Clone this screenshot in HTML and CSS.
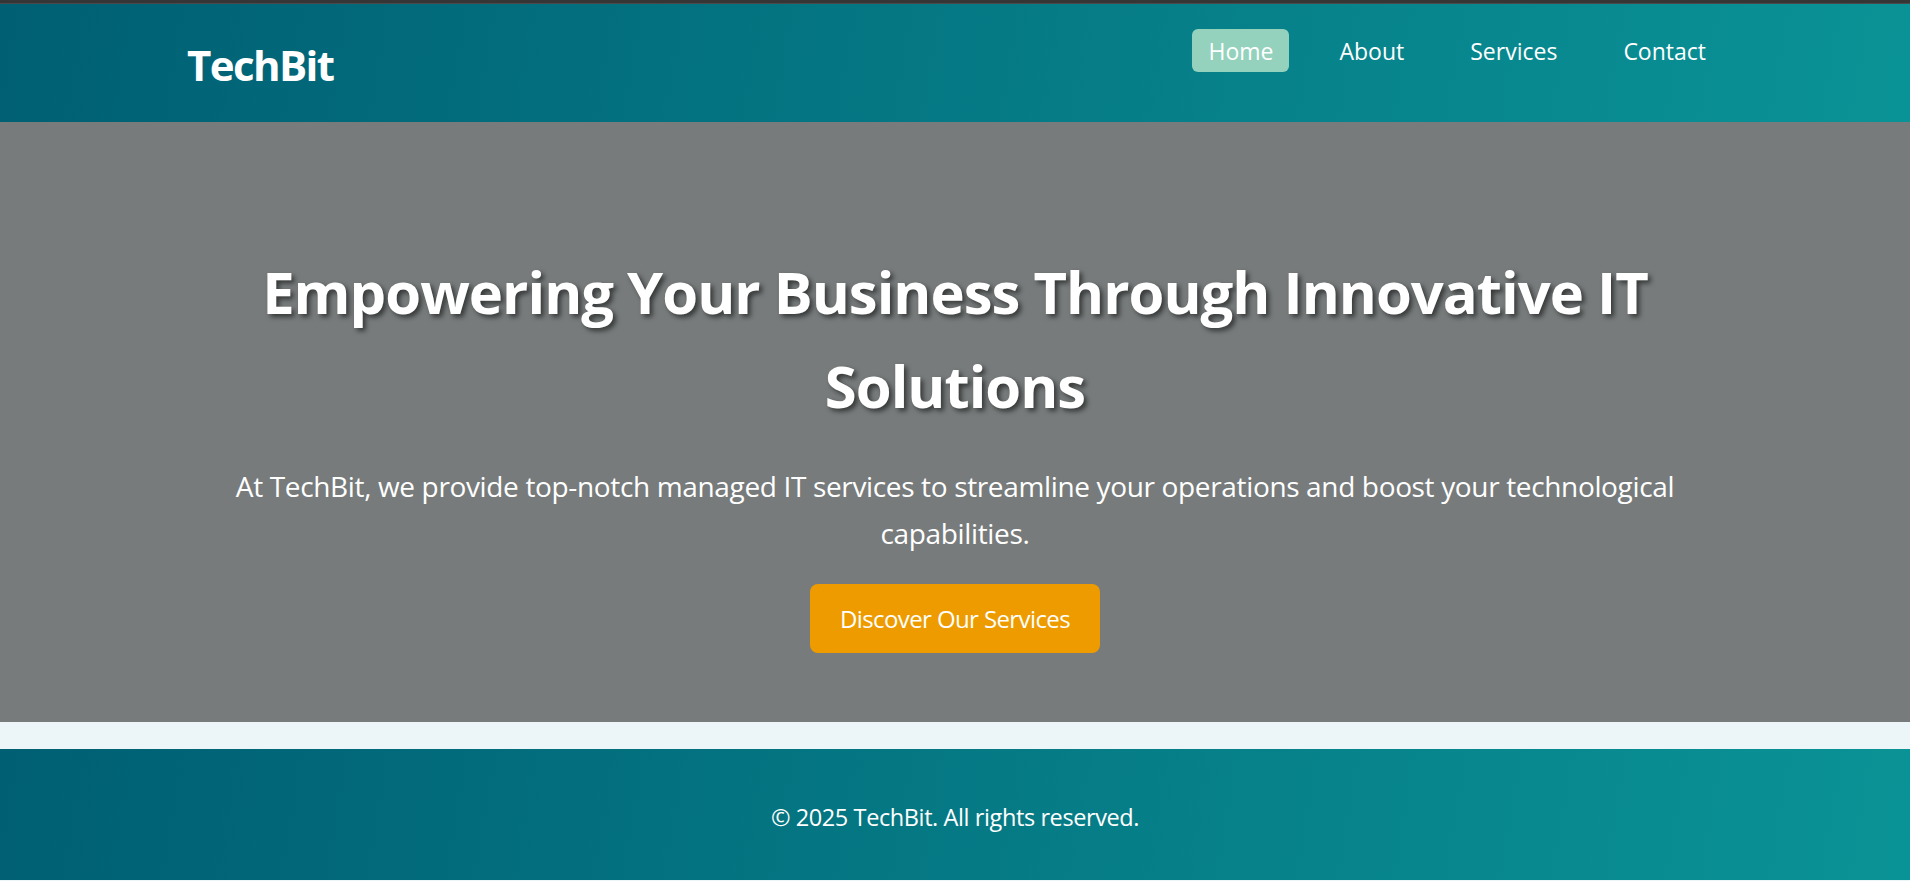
FILE: index.html
```html
<!DOCTYPE html>
<html lang="en">
<head>
<meta charset="utf-8">
<title>TechBit</title>
<link rel="stylesheet" href="styles.css">
</head>
<body>
<div class="topbar"></div>
<header class="site-header">
  <div class="logo">TechBit</div>
  <nav class="main-nav">
    <ul class="nav-list">
      <li><a class="nav-link active" href="#">Home</a></li>
      <li><a class="nav-link" href="#">About</a></li>
      <li><a class="nav-link" href="#">Services</a></li>
      <li><a class="nav-link" href="#">Contact</a></li>
    </ul>
  </nav>
</header>
<section class="hero">
  <h1 class="hero-title">Empowering Your Business Through Innovative IT Solutions</h1>
  <p class="hero-text">At TechBit, we provide top-notch managed IT services to streamline your operations and boost your technological capabilities.</p>
  <a class="btn" href="#">Discover Our Services</a>
</section>
<div class="spacer"></div>
<footer class="site-footer">
  <p class="copyright">© 2025 TechBit. All rights reserved.</p>
</footer>
</body>
</html>
```
FILE: styles.css
```css
* { box-sizing: border-box; }
html, body { margin: 0; padding: 0; }
body {
  font-family: "Open Sans", "Noto Sans", sans-serif;
  color: #fff;
  background: #ecf5f8;
}
.topbar {
  height: 4px;
  background: #363636;
  border-bottom: 1px solid #4a4a4a;
}
.site-header {
  height: 118px;
  padding: 0 188px 0 187px;
  display: flex;
  justify-content: space-between;
  align-items: flex-start;
  background: linear-gradient(100deg, #005f73 0%, #0a9396 100%);
}
.logo {
  font-size: 42px;
  font-weight: 700;
  line-height: 44px;
  margin-top: 39px;
  letter-spacing: -1.6px;
}
.nav-list {
  list-style: none;
  margin: 25px 0 0;
  padding: 0;
  display: flex;
  gap: 34px;
}
.nav-link {
  display: block;
  padding: 9px 16px 7px;
  font-size: 23px;
  line-height: 27px;
  color: #fff;
  text-decoration: none;
  border-radius: 6px;
}
.nav-link.active { background: #94d2bd; }
.hero {
  height: 600px;
  background: #777b7b;
  padding: 123px 0 0;
  text-align: center;
}
.hero-title {
  margin: 0 auto;
  max-width: 1450px;
  font-size: 58px;
  line-height: 94px;
  font-weight: 700;
  letter-spacing: -1px;
  text-shadow: 3px 3px 5px rgba(0,0,0,0.55);
}
.hero-text {
  margin: 30px auto 0;
  max-width: 1500px;
  font-size: 28px;
  line-height: 47px;
  letter-spacing: -0.35px;
}
.btn {
  display: inline-block;
  margin-top: 27px;
  padding: 18px 30px;
  font-size: 24px;
  line-height: 33px;
  letter-spacing: -0.6px;
  color: #fff;
  text-decoration: none;
  background: #ee9b00;
  border-radius: 8px;
}
.spacer { height: 27px; background: #ecf5f8; }
.site-footer {
  height: 131px;
  padding-top: 48px;
  text-align: center;
  background: linear-gradient(100deg, #005f73 0%, #0a9396 100%);
}
.copyright {
  margin: 0;
  font-size: 23.5px;
  line-height: 40px;
  letter-spacing: -0.4px;
}
```
